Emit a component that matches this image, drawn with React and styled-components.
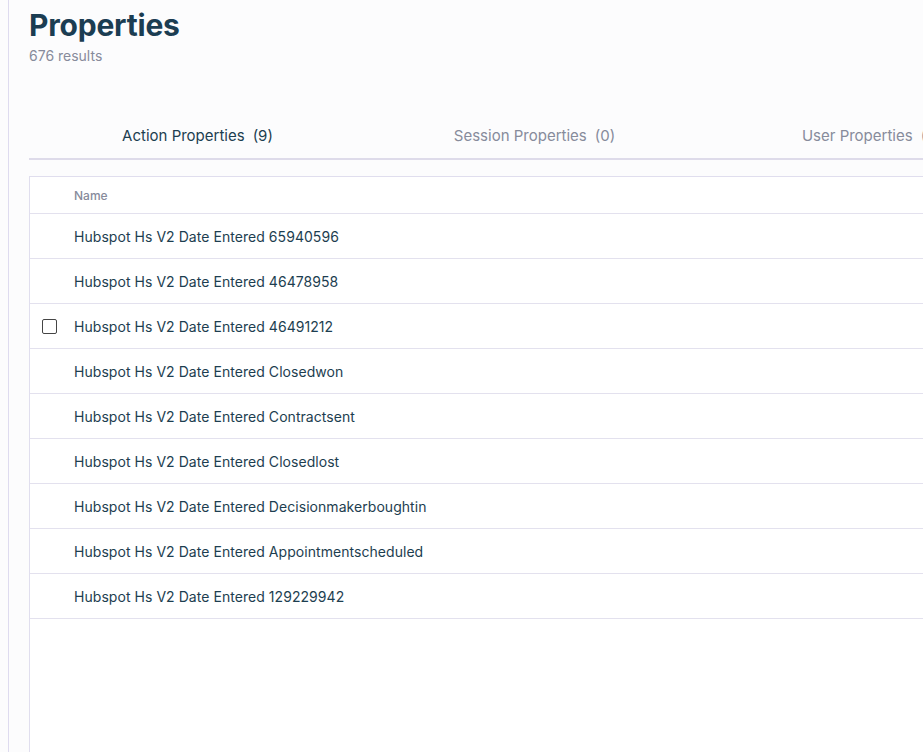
import React from "react";
import styled, { createGlobalStyle } from "styled-components";

const GlobalStyle = createGlobalStyle`
	html, body {
		margin: 0;
		padding: 0;
		overflow: hidden;
		background: #fcfcfd;
		font-family: Inter, "Noto Sans", sans-serif;
	}
`;

const StyledPage = styled.div`
	padding-left: 8px;
	height: 100vh;
	display: flex;
`;

const StyledMain = styled.main`
	flex: 0 0 auto;
	width: 1100px;
	border-left: 1px solid #dedbef;
	padding-left: 20px;
	display: flex;
	flex-direction: column;
`;

const Title = styled.h1`
	margin: 7px 0 0;
	font-size: 30px;
	line-height: 36px;
	font-weight: 700;
	color: #1b3d52;
	letter-spacing: -0.2px;
`;

const Count = styled.p`
	margin: 5px 0 0;
	font-size: 14px;
	line-height: 16px;
	color: #878b9b;
`;

const StyledTabs = styled.nav`
	margin-top: 48px;
	display: flex;
	border-bottom: 2px solid #dedbea;
`;

const Tab = styled.button`
	flex: 0 0 337px;
	height: 46px;
	border: none;
	background: transparent;
	font-family: inherit;
	font-size: 15px;
	padding: 0;
	color: ${(p) => (p.$active ? "#1d3e50" : "#878b9b")};
	cursor: pointer;
	white-space: nowrap;
`;

const TabCount = styled.span`
	margin-left: 8px;
`;

const StyledTable = styled.div`
	margin-top: 16px;
	flex: 1;
	background: #fff;
	border: 1px solid #e0deee;
	border-bottom: none;
`;

const Row = styled.div`
	display: flex;
	align-items: center;
	height: ${(p) => (p.$head ? "36px" : "44px")};
	border-bottom: 1px solid #e3e1ee;
`;

const CheckCell = styled.div`
	width: 44px;
	display: flex;
	padding-left: 12px;
	box-sizing: border-box;
`;

const Checkbox = styled.span`
	display: block;
	width: 13px;
	height: 13px;
	border: 1.5px solid #454545;
	border-radius: 2px;
	visibility: ${(p) => (p.$show ? "visible" : "hidden")};
`;

const NameCell = styled.div`
	font-size: ${(p) => (p.$head ? "12px" : "14px")};
	font-weight: ${(p) => (p.$head ? 500 : 400)};
	color: ${(p) => (p.$head ? "#878b9b" : "#1d3e50")};
	letter-spacing: ${(p) => (p.$head ? "0" : "0.05px")};
`;

const properties = [
	"65940596",
	"46478958",
	"46491212",
	"Closedwon",
	"Contractsent",
	"Closedlost",
	"Decisionmakerboughtin",
	"Appointmentscheduled",
	"129229942",
];

const tabs = [
	{ label: "Action Properties", count: 9, active: true },
	{ label: "Session Properties", count: 0 },
	{ label: "User Properties", count: 0 },
];

const App = () => {
	return (
		<StyledPage>
			<GlobalStyle />
			<StyledMain>
				<Title>Properties</Title>
				<Count>676 results</Count>
				<StyledTabs>
					{tabs.map((t) => (
						<Tab key={t.label} $active={t.active}>
							{t.label}
							<TabCount>({t.count})</TabCount>
						</Tab>
					))}
				</StyledTabs>
				<StyledTable>
					<Row $head>
						<CheckCell />
						<NameCell $head>Name</NameCell>
					</Row>
					{properties.map((p, i) => (
						<Row key={p}>
							<CheckCell>
								<Checkbox $show={i === 2} />
							</CheckCell>
							<NameCell>Hubspot Hs V2 Date Entered {p}</NameCell>
						</Row>
					))}
				</StyledTable>
			</StyledMain>
		</StyledPage>
	);
};

export default App;
